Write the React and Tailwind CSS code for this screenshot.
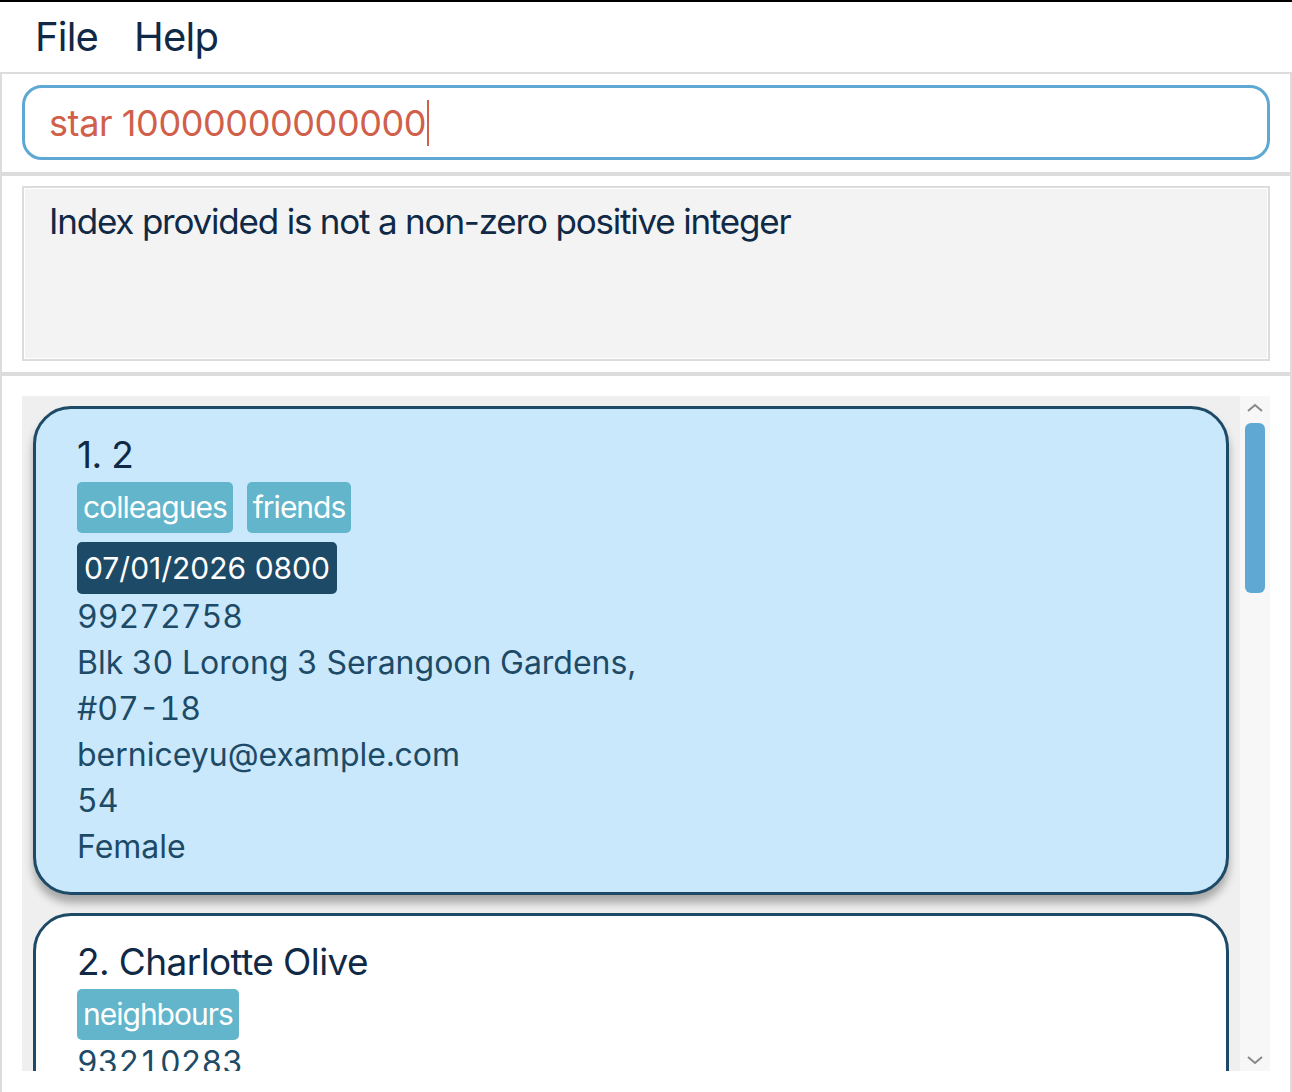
import React from "react";

const persons = [
  {
    index: 1,
    name: "2",
    tags: ["colleagues", "friends"],
    appt: "07/01/2026 0800",
    phone: "99272758",
    address: ["Blk 30 Lorong 3 Serangoon Gardens,", "#07-18"],
    email: "berniceyu@example.com",
    age: "54",
    gender: "Female",
    selected: true,
  },
  {
    index: 2,
    name: "Charlotte Olive",
    tags: ["neighbours"],
    phone: "93210283",
    address: ["Blk 11 Ang Mo Kio Street 74, #11-04"],
    email: "charlotte@example.com",
    age: "31",
    gender: "Female",
  },
];

const PersonCard = ({ p }) => (
  <div
    className={
      "rounded-[38px] border-[3px] border-[#1d4a66] pl-[41px] pr-6 pt-[22px] pb-[22px] shrink-0 " +
      (p.selected ? "bg-[#c9e8fc] shadow-[0_8px_8px_rgba(0,0,0,0.3)]" : "bg-white")
    }
  >
    <div className="text-[37px] leading-[48px] tracking-[-0.6px] text-[#0f2946]">
      {p.index}. {p.name}
    </div>
    <div className="flex gap-[14px] mt-[3px]">
      {p.tags.map((t) => (
        <span
          key={t}
          className="bg-[#62b5cb] text-white text-[30px] leading-[51px] tracking-[-1px] px-[6px] rounded-[5px]"
        >
          {t}
        </span>
      ))}
    </div>
    {p.appt && (
      <div className="mt-[9px]">
        <span className="inline-block bg-[#1d4a66] text-white text-[30px] leading-[52px] px-[7px] rounded-[5px]">
          {p.appt}
        </span>
      </div>
    )}
    <div className="text-[32px] leading-[46px] text-[#1d4a66] tabular-nums">
      <div>{p.phone}</div>
      {p.address.map((a) => (
        <div key={a}>{a}</div>
      ))}
      <div>{p.email}</div>
      <div>{p.age}</div>
      <div>{p.gender}</div>
    </div>
  </div>
);

export default function App() {
  return (
    <div
      className="w-[1292px] h-[1092px] overflow-hidden bg-white flex flex-col border-t-2 border-black"
      style={{ fontFamily: "Inter, 'Noto Sans', sans-serif" }}
    >
      {/* menu */}
      <div className="h-[70px] flex items-center gap-[36px] pl-[35px] text-[40px] tracking-[-0.8px] text-[#0f2946] shrink-0">
        <span>File</span>
        <span>Help</span>
      </div>

      <div className="flex-1 flex flex-col border-x-2 border-[#dcdcdc] border-t-2">
        {/* command box */}
        <div className="px-[20px] pt-[11px] pb-[12px] border-b-4 border-[#dcdcdc]">
          <div className="h-[75px] rounded-[20px] border-[3px] border-[#5fa8d3] flex items-center pl-[24px]">
            <span className="text-[36px] tracking-[-0.4px] text-[#d0604a]">star 10000000000000</span>
            <span className="w-[2px] h-[46px] bg-[#d0604a] ml-[1px]" />
          </div>
        </div>

        {/* result display */}
        <div className="px-[20px] pt-[10px] pb-[11px] border-b-4 border-[#dcdcdc]">
          <div className="h-[175px] border-2 border-[#dcdcdc] bg-[#f3f3f3] shadow-[inset_0_0_0_1px_#ffffff] pl-[25px] pt-[7px]">
            <span className="text-[35px] tracking-[-1.2px] text-[#0f2946]">
              Index provided is not a non-zero positive integer
            </span>
          </div>
        </div>

        {/* list */}
        <div className="flex-1 px-[20px] pt-[20px] pb-[20px] min-h-0">
          <div className="h-[675px] flex">
            <div className="flex-1 bg-[#efefef] pl-[11px] pr-[11px] pt-[10px] overflow-hidden flex flex-col gap-[18px]">
              {persons.map((p) => (
                <PersonCard key={p.index} p={p} />
              ))}
            </div>
            <div className="w-[30px] bg-[#f7f7f7] flex flex-col items-center py-[4px]">
              <svg width="18" height="12" viewBox="0 0 18 12" className="mt-[2px]">
                <path d="M2 9 L9 3 L16 9" fill="none" stroke="#888" strokeWidth="2" />
              </svg>
              <div className="w-[20px] h-[170px] rounded-[6px] bg-[#5fa8d3] mt-[9px]" />
              <div className="flex-1" />
              <svg width="18" height="12" viewBox="0 0 18 12" className="mb-[1px]">
                <path d="M2 3 L9 9 L16 3" fill="none" stroke="#888" strokeWidth="2" />
              </svg>
            </div>
          </div>
        </div>
      </div>
    </div>
  );
}
